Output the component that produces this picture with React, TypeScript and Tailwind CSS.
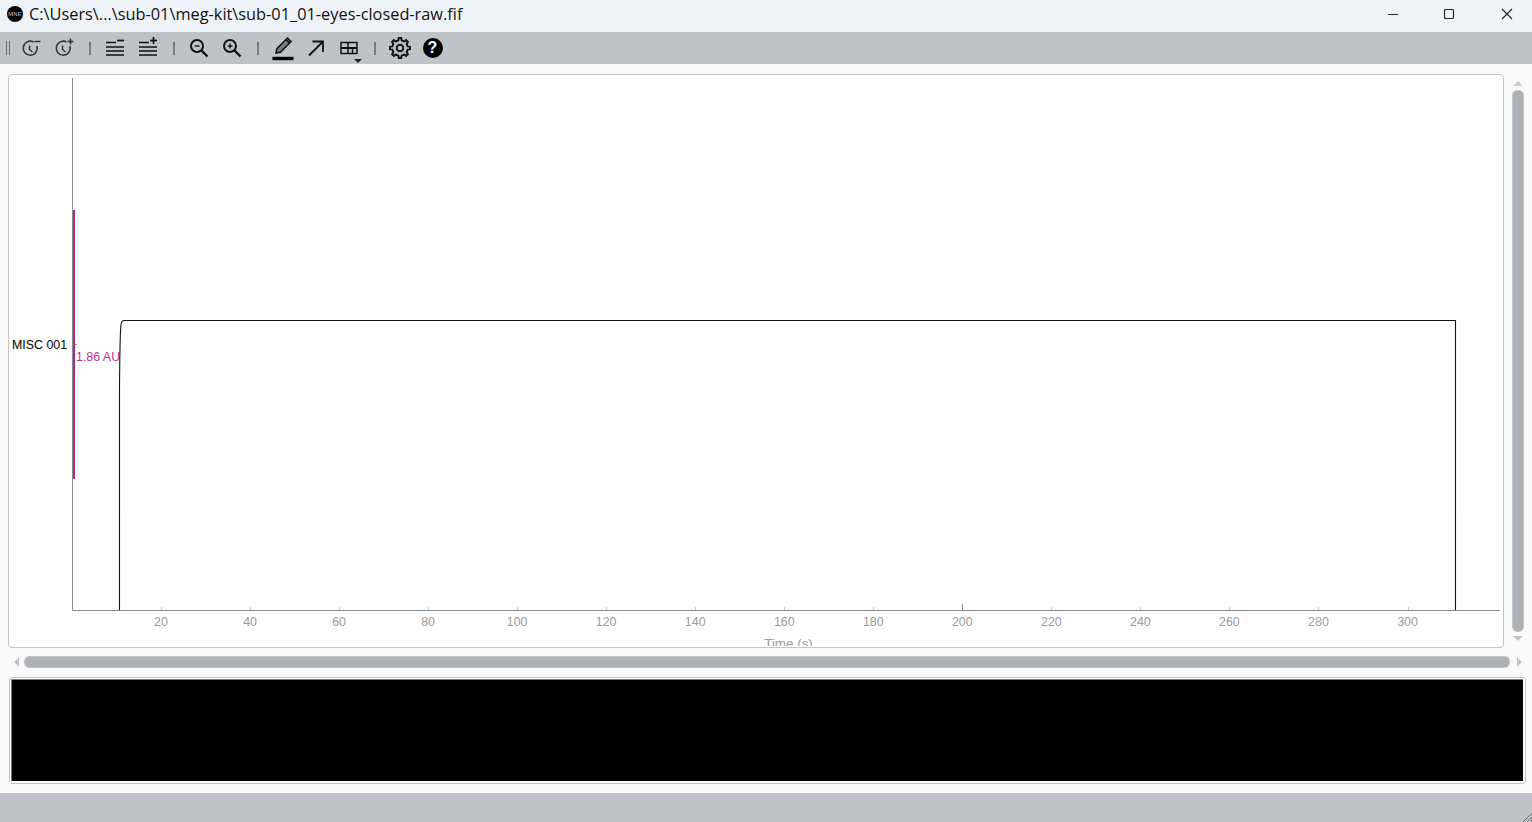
import React from "react";

const ticks = [20,40,60,80,100,120,140,160,180,200,220,240,260,280,300];
const tx = (v: number) => 161 + ((v - 20) * (1407.5 - 161)) / 280;

const gearPath = (() => {
  const pts: string[] = [];
  const n = 8;
  for (let i = 0; i < n; i++) {
    const a = (i * 2 * Math.PI) / n - Math.PI / 2;
    const step = (2 * Math.PI) / n;
    const seq: [number, number][] = [
      [8.4, -0.5 * step],
      [8.4, -0.27 * step],
      [11, -0.17 * step],
      [11, 0.17 * step],
      [8.4, 0.27 * step],
    ];
    seq.forEach(([r, d]) => {
      pts.push(`${(12 + r * Math.cos(a + d)).toFixed(2)} ${(12 + r * Math.sin(a + d)).toFixed(2)}`);
    });
  }
  return "M" + pts.join("L") + "Z";
})();

function Btn({ children }: { children: React.ReactNode }) {
  return <div className="w-[33px] h-[32px] flex items-center justify-center shrink-0">{children}</div>;
}
function Sep() {
  return <div className="w-[18px] h-[32px] flex items-center justify-center shrink-0"><div className="ml-[2px] w-[2px] h-[13px] bg-[#777b80]" /></div>;
}
const S = (p: { children: React.ReactNode }) => (
  <svg width={24} height={24} viewBox="0 0 24 24" fill="none">{p.children}</svg>
);

function Clock({ plus }: { plus?: boolean }) {
  return (
    <S>
      <path d="M14.5 6A7 7 0 1 0 17.9 10" stroke="#333" strokeWidth="1.6" />
      <path d="M10.5 9.5v4l3 2.5" stroke="#333" strokeWidth="1.5" />
      <path d="M15.5 5.5h6" stroke="#333" strokeWidth="1.5" />
      {plus && <path d="M18.5 2.5v6" stroke="#333" strokeWidth="1.5" />}
    </S>
  );
}
function Lines({ plus }: { plus?: boolean }) {
  return (
    <S>
      <path d="M3 6.5h10M3 11h18M3 15h18M3 19h18" stroke="#111" strokeWidth="1.7" />
      <path d="M14 4.5h7" stroke="#111" strokeWidth="1.7" />
      {plus && <path d="M17.5 1v7" stroke="#111" strokeWidth="1.7" />}
    </S>
  );
}
function Zoom({ plus }: { plus?: boolean }) {
  return (
    <S>
      <circle cx="10" cy="10" r="6" stroke="#111" strokeWidth="2" />
      <path d="M14.5 14.5l6 6" stroke="#111" strokeWidth="2.4" />
      <path d="M7.5 10h5" stroke="#111" strokeWidth="1.4" />
      {plus && <path d="M10 7.5v5" stroke="#111" strokeWidth="1.4" />}
    </S>
  );
}

export default function App() {
  return (
    <div className="w-[1532px] h-[822px] flex flex-col overflow-hidden bg-[#fafafa] font-['Liberation_Sans',sans-serif]">
      {/* title bar */}
      <div className="h-[32px] bg-[#eef3fa] flex items-center shrink-0">
        <div className="ml-[7px] w-[16px] h-[16px] rounded-full bg-black flex items-center justify-center -mt-[4px]">
          <span className="text-[6px] leading-none font-bold bg-gradient-to-r from-[#f0802a] to-[#3aa0f0] bg-clip-text text-transparent">MNE</span>
        </div>
        <div className="ml-[6px] -mt-[4px] text-[16.34px] text-[#111] font-['Open_Sans',sans-serif] whitespace-nowrap">C:\Users\...\sub-01\meg-kit\sub-01_01-eyes-closed-raw.fif</div>
        <div className="ml-auto flex items-center h-full -mt-[4px]">
          <div className="w-[46px] flex justify-center"><svg width="12" height="12" viewBox="0 0 12 12" stroke="#222" fill="none"><path d="M1 6.5h10" /></svg></div>
          <div className="w-[66px] flex justify-center"><svg width="12" height="12" viewBox="0 0 12 12" stroke="#222" fill="none"><rect x="1.5" y="1.5" width="9" height="9" rx="1" strokeWidth="1.2" /></svg></div>
          <div className="w-[50px] flex justify-center"><svg width="12" height="12" viewBox="0 0 12 12" stroke="#222" fill="none"><path d="M1 1l10 10M11 1L1 11" strokeWidth="1.1" /></svg></div>
        </div>
      </div>

      {/* toolbar */}
      <div className="h-[32px] bg-[#bfc3c8] flex items-center pl-[6px] shrink-0">
        <div className="w-[4px] h-[14px] border-x border-[#666a6e] shrink-0 mr-[4px]" />
        <Btn><Clock /></Btn>
        <Btn><Clock plus /></Btn>
        <Sep />
        <Btn><Lines /></Btn>
        <Btn><Lines plus /></Btn>
        <Sep />
        <Btn><Zoom /></Btn>
        <Btn><Zoom plus /></Btn>
        <Sep />
        <Btn>
          <svg width="24" height="26" viewBox="0 0 24 26" fill="none">
            <path d="M5 18l.9-4.3L16.5 3l3.6 3.6L9.4 17.2z" stroke="#111" strokeWidth="1.5" fill="#7a7d80" />
            <path d="M15 4.5l3.6 3.6" stroke="#111" strokeWidth="1.5" />
            <path d="M1.5 23.5h21" stroke="#000" strokeWidth="3.4" />
          </svg>
        </Btn>
        <Btn>
          <svg width="20" height="20" viewBox="0 0 20 20" fill="none" stroke="#111" strokeWidth="1.8"><path d="M3 17.5L17 3.5M6.5 3.5H17V14" /></svg>
        </Btn>
        <Btn>
          <div className="relative">
            <svg width="18" height="14" viewBox="0 0 18 14" fill="none" stroke="#111" strokeWidth="1.5"><rect x="1" y="1.5" width="16" height="11" /><path d="M1 7h16" strokeWidth="2" /><path d="M8 1.5v11M12.5 7v5.5" /></svg>
            <div className="absolute left-[14px] top-[18px] w-0 h-0 border-x-[4px] border-x-transparent border-t-[4px] border-t-[#222]" />
          </div>
        </Btn>
        <Sep />
        <Btn>
          <svg width="22" height="22" viewBox="0 0 24 24" fill="none" stroke="#111" strokeWidth="2.1" strokeLinejoin="round"><path d={gearPath} /><circle cx="12" cy="12" r="3.6" /></svg>
        </Btn>
        <Btn>
          <div className="w-[20px] h-[20px] rounded-full bg-black text-white flex items-center justify-center text-[16px] font-bold leading-none">?</div>
        </Btn>
      </div>

      {/* main */}
      <div className="flex-1 flex flex-col pt-[10px]">
        <div className="flex h-[574px] pl-[8px]">
          <div className="w-[1496px] h-[574px] bg-white border border-[#c4c4c4] rounded-[4px] overflow-hidden">
            <svg width="1494" height="571" viewBox="9 75 1494 571" className="block">
              <path d="M72.5 78V610.5H1500" stroke="#8a8a8a" fill="none" />
              {ticks.map((t) => (
                <g key={t}>
                  <path d={`M${Math.round(tx(t)) + 0.5} ${t === 200 ? 604 : 607}V610`} stroke={t === 200 ? "#8a8a8a" : "#cfcfcf"} />
                  <text x={tx(t)} y="626" textAnchor="middle" fontSize="12.4" fill="#9a9a9a" fontFamily="Liberation Sans">{t}</text>
                </g>
              ))}
              <path d="M72 344.5h5" stroke="#999" />
              <text x="12" y="349" fontSize="12.4" fill="#000" fontFamily="Liberation Sans">MISC 001</text>
              <text x="76" y="361" fontSize="12.4" fill="#b8348c" fontFamily="Liberation Sans">1.86 AU</text>
              <rect x="73" y="210" width="2" height="269" fill="#b02a7f" />
              <path d="M119.5 610V390C119.8 350 120 330 121 325Q121.5 320.5 124 320.5H1455.5V610" stroke="#111" strokeWidth="1.1" fill="none" />
              <text x="788.5" y="648" textAnchor="middle" fontSize="13.4" fill="#9a9a9a" fontFamily="Liberation Sans">Time (s)</text>
            </svg>
          </div>
          <div className="w-[12px] ml-[8px] flex flex-col items-center pt-[7px]">
            <div className="w-0 h-0 border-x-[5px] border-x-transparent border-b-[5px] border-b-[#c9cccf]" />
            <div className="w-[12px] h-[542px] mt-[4px] rounded-[5px] bg-[#adb1b5] border border-[#c4c7ca]" />
            <div className="w-0 h-0 mt-[4px] border-x-[5px] border-x-transparent border-t-[5px] border-t-[#c0c3c6]" />
          </div>
        </div>
        <div className="h-[12px] mt-[8px] flex items-center pl-[14px]">
          <div className="w-0 h-0 border-y-[5px] border-y-transparent border-r-[5px] border-r-[#c0c3c6]" />
          <div className="ml-[5px] w-[1486px] h-[12px] rounded-[5px] bg-[#adb1b5] border border-[#c4c7ca]" />
          <div className="ml-[7px] w-0 h-0 border-y-[5px] border-y-transparent border-l-[5px] border-l-[#c0c3c6]" />
        </div>
        <div className="ml-[9px] mt-[9px] w-[1517px] h-[107px] border border-[#c4c4c4] rounded-[3px] pl-[1px] pt-[1px] pr-[2px] pb-[2px] bg-white">
          <div className="w-full h-full bg-black border-l border-t border-[#00d000]" />
        </div>
      </div>

      {/* status bar */}
      <div className="h-[29px] bg-[#bfc3c8] shrink-0 flex justify-end items-end">
        <svg width="12" height="12" viewBox="0 0 12 12" stroke="#666a6e" fill="none"><path d="M12 3L3 12M12 7l-5 5M12 10l-2 2" /></svg>
      </div>
    </div>
  );
}
